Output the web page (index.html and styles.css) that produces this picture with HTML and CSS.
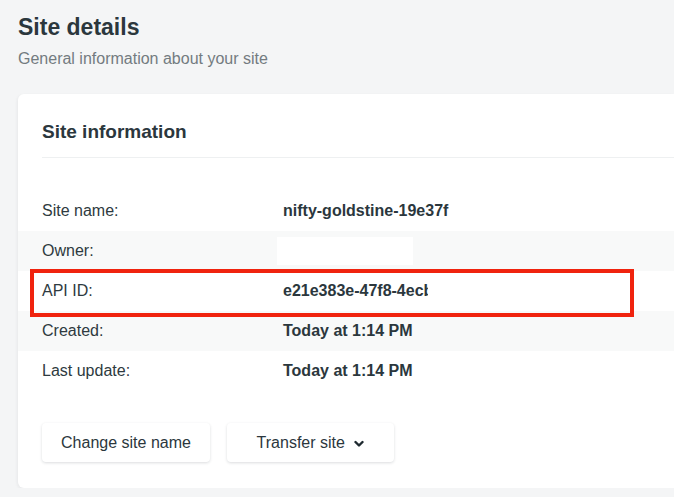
FILE: index.html
```html
<!DOCTYPE html>
<html lang="en">
  <head>
    <meta charset="UTF-8" />
    <title>Site details</title>
    <link rel="stylesheet" href="styles.css">
  </head>
  <body>
    <h1>Site details</h1>
    <p class="subtitle">General information about your site</p>

    <div class="card">
      <h2>Site information</h2>

      <div class="rows">
        <div class="row">
          <span class="label">Site name:</span>
          <span class="value">nifty-goldstine-19e37f</span>
        </div>
        <div class="row shaded">
          <span class="label">Owner:</span>
          <span class="redacted"></span>
        </div>
        <div class="row">
          <span class="label">API ID:</span>
          <span class="value clipped">e21e383e-47f8-4ecb</span>
        </div>
        <div class="row shaded">
          <span class="label">Created:</span>
          <span class="value">Today at 1:14 PM</span>
        </div>
        <div class="row">
          <span class="label">Last update:</span>
          <span class="value">Today at 1:14 PM</span>
        </div>
        <div class="highlight"></div>
      </div>

      <div class="actions">
        <button class="rename">Change site name</button>
        <button class="transfer">
          Transfer site
          <svg width="10" height="8" viewBox="0 0 10 8">
            <path d="M1.5 2 L5 5.5 L8.5 2" fill="none" stroke="#1f2a30" stroke-width="2.4" stroke-linecap="round" stroke-linejoin="round" />
          </svg>
        </button>
      </div>
    </div>
  </body>
</html>
```

FILE: styles.css
```css
body {
  margin: 0;
  padding: 13px 0 0 18px;
  background: #f4f5f6;
  font-family: "Liberation Sans", Arial, sans-serif;
  color: #2e3a40;
  overflow: hidden;
}

h1 {
  margin: 0;
  font-size: 23px;
  line-height: 28px;
  font-weight: bold;
  color: #2b373d;
}

.subtitle {
  margin: 6px 0 0;
  font-size: 16px;
  line-height: 24px;
  color: #737b80;
}

.card {
  margin-top: 23px;
  background: #fff;
  border-radius: 6px 0 0 6px;
  box-shadow: -1px 1px 3px rgba(30, 40, 50, 0.06);
  padding-bottom: 26px;
}

h2 {
  margin: 0 0 0 24px;
  padding: 26px 0 13px;
  font-size: 19px;
  line-height: 24px;
  font-weight: bold;
  color: #2b373d;
  border-bottom: 1px solid #eef0f1;
}

.rows {
  position: relative;
  margin-top: 33px;
}

.row {
  display: flex;
  align-items: center;
  height: 40px;
  padding-left: 24px;
  font-size: 16px;
}

.shaded {
  background: #f8f9f9;
}

.label {
  width: 241px;
  color: #2e3a40;
}

.value {
  font-weight: bold;
  color: #2b373d;
}

.clipped {
  width: 145px;
  overflow: hidden;
  white-space: nowrap;
}

.redacted {
  width: 136px;
  height: 28px;
  margin-left: -6px;
  background: #fff;
}

.highlight {
  position: absolute;
  left: 12px;
  top: 78px;
  width: 596px;
  height: 40px;
  border: 4px solid #f0230e;
}

.actions {
  display: flex;
  gap: 17px;
  margin: 32px 0 0 24px;
}

button {
  height: 39px;
  padding: 0;
  background: #fff;
  border: none;
  border-radius: 4px;
  box-shadow: 0 1px 3px rgba(30, 40, 50, 0.16);
  font-family: inherit;
  font-size: 16px;
  color: #2b373d;
}

button svg {
  margin-left: 5px;
}

.rename {
  width: 168px;
}

.transfer {
  width: 167px;
}
```
